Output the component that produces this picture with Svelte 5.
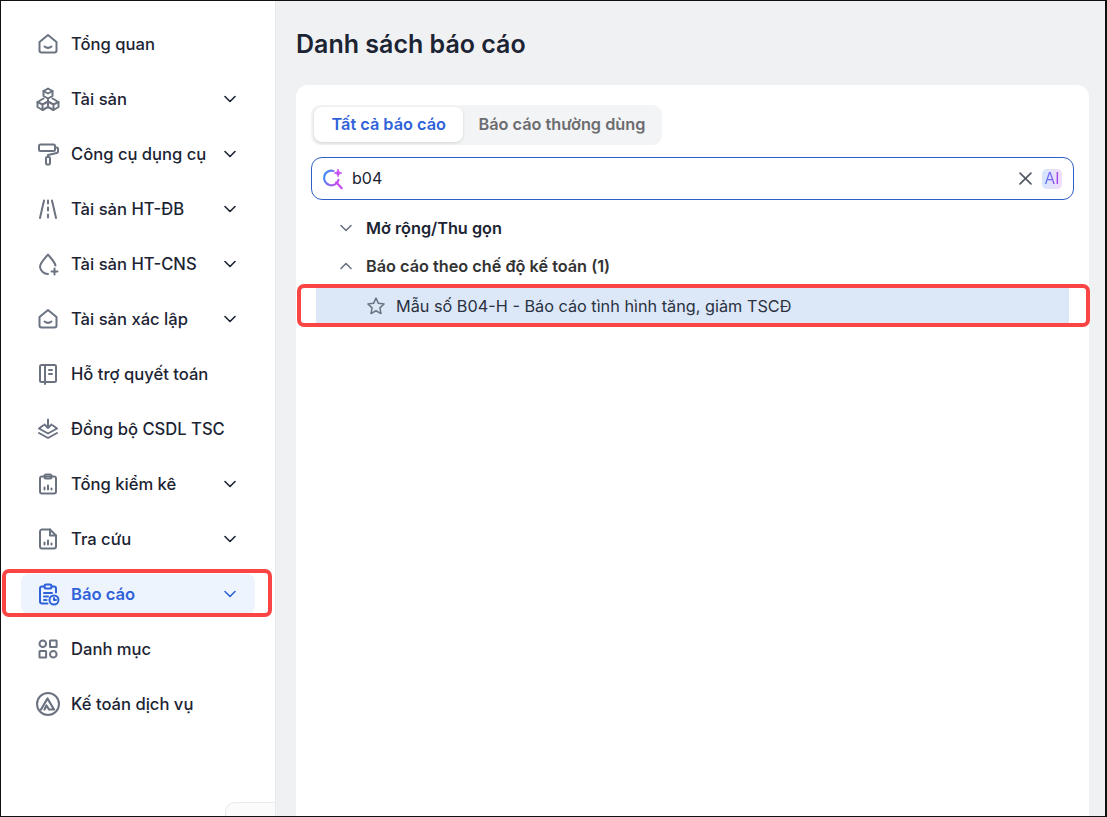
<script lang="ts">
    // Sidebar entries, icon is a key into the snippet below
    const navItems = [
        { label: "Tổng quan", icon: "home", arrow: false },
        { label: "Tài sản", icon: "boxes", arrow: true },
        { label: "Công cụ dụng cụ", icon: "roller", arrow: true },
        { label: "Tài sản HT-ĐB", icon: "road", arrow: true },
        { label: "Tài sản HT-CNS", icon: "drop", arrow: true },
        { label: "Tài sản xác lập", icon: "home", arrow: true },
        { label: "Hỗ trợ quyết toán", icon: "book", arrow: false },
        { label: "Đồng bộ CSDL TSC", icon: "layers", arrow: false },
        { label: "Tổng kiểm kê", icon: "clipboard", arrow: true },
        { label: "Tra cứu", icon: "file", arrow: true },
        { label: "Báo cáo", icon: "report", arrow: true, active: true },
        { label: "Danh mục", icon: "grid", arrow: false },
        { label: "Kế toán dịch vụ", icon: "logo", arrow: false }
    ];
</script>

{#snippet navIcon(name: string)}
    <svg class="nav-icon" viewBox="0 0 24 24" fill="none" stroke="currentColor" stroke-width="2" stroke-linecap="round" stroke-linejoin="round">
        {#if name === "home"}
            <path d="M3.500 10 12 3l8.500 7v8.500a2 2 0 0 1-2 2h-13a2 2 0 0 1-2-2z" />
            <path d="M8.500 14.500c2 1.600 5 1.600 7 0" />
        {:else if name === "boxes"}
            <path d="M12 1.500l4.500 2.500v5l-4.500 2.500L7.500 9V4z" />
            <path d="M7.500 11.500 1.500 15v5L6.500 23 12 20l5.500 3 5-3v-5l-6-3.500" />
            <path d="M12 11.500V20M6.500 17.500V23M17.500 17.500V23M1.500 15l5 2.500L12 14.500l5.500 3 5-2.500M7.500 4 12 6.500 16.500 4" />
        {:else if name === "roller"}
            <path d="M4.500 2.500h13A1.500 1.500 0 0 1 19 4v3.500A1.500 1.500 0 0 1 17.500 9h-13A1.500 1.500 0 0 1 3 7.500V4a1.500 1.500 0 0 1 1.500-1.500z" />
            <path d="M19 5.500h1.500A1.500 1.500 0 0 1 22 7v2.500a1.500 1.500 0 0 1-1.200 1.500L12 13v2" />
            <rect x="10" y="15" width="4" height="7.500" rx="1.300" />
        {:else if name === "road"}
            <path d="M8 3.500 4 21M16 3.500 20 21M12 3.500v3M12 10.500v3M12 17.500v3" />
        {:else if name === "drop"}
            <path d="M19.500 13.500C18.500 9.500 15 6.500 12 2.500 8.500 7 4 10.500 4 15a8 8 0 0 0 8 7" />
            <path d="M18.500 16.500v6M15.500 19.500h6" />
        {:else if name === "book"}
            <path d="M5.500 3h13A1.500 1.500 0 0 1 20 4.500v14a1.500 1.500 0 0 1-1.500 1.500h-13A1.500 1.500 0 0 1 4 18.500v-14A1.500 1.500 0 0 1 5.500 3z" />
            <path d="M9 3v19M13 8h3M13 12h3" />
        {:else if name === "layers"}
            <path d="M12 2.500v8.500M8.500 7.500l3.500 3.500 3.500-3.500" />
            <path d="M7 8.500 3 11.500l9 5 9-5-4-3" />
            <path d="M3 16l9 5 9-5" />
        {:else if name === "clipboard"}
            <rect x="4" y="4.500" width="16" height="17" rx="2" />
            <rect x="8.500" y="2.500" width="7" height="4" rx="1.500" />
            <path d="M8.500 17.500v-2M12 17.500v-4M15.500 17.500v-1" />
        {:else if name === "file"}
            <path d="M14 2.500H6a2 2 0 0 0-2 2v15a2 2 0 0 0 2 2h12a2 2 0 0 0 2-2V8.500z" />
            <path d="M14 2.500v6h6M8.500 17.500v-2M12 17.500v-4M15.500 17.500v-1" />
        {:else if name === "report"}
            <path d="M8.500 4.500H6a2 2 0 0 0-2 2v13a2 2 0 0 0 2 2h5.500M15.500 4.500H18a2 2 0 0 1 2 2v4" />
            <rect x="8.500" y="2.500" width="7" height="4" rx="1.500" />
            <path d="M8 11h8M8 14.500h4M8 18h2.500" />
            <circle cx="18" cy="18" r="4.500" />
            <path d="M18 16v2h2" />
        {:else if name === "grid"}
            <circle cx="6.800" cy="6.800" r="3.300" />
            <rect x="14" y="3.500" width="6.600" height="6.600" rx="0.500" />
            <rect x="3.500" y="14" width="6.600" height="6.600" rx="0.500" />
            <circle cx="17.300" cy="17.300" r="3.300" />
        {:else if name === "logo"}
            <circle cx="12" cy="12" r="11" />
            <path d="M5 17.500 11.500 6.500l6.500 11h-5l-2.500-4-2 4" stroke-width="2.200" />
        {/if}
    </svg>
{/snippet}

{#snippet chevron(cls: string)}
    <svg class={cls} viewBox="0 0 12 8" fill="none" stroke="currentColor" stroke-width="1.600" stroke-linecap="round" stroke-linejoin="round">
        <path d="M1 1.500 6 6.500l5-5" />
    </svg>
{/snippet}

<div class="page">
    <aside class="sidebar">
        <nav class="nav">
            {#each navItems as item}
                <div class="nav-item" class:active={item.active}>
                    {@render navIcon(item.icon)}
                    <span class="nav-label">{item.label}</span>
                    {#if item.arrow}
                        {@render chevron("nav-arrow")}
                    {/if}
                    {#if item.active}
                        <span class="mark mark-nav"></span>
                    {/if}
                </div>
            {/each}
        </nav>
        <div class="collapse-tab"></div>
    </aside>

    <main class="main">
        <h1 class="title">Danh sách báo cáo</h1>
        <section class="card">
            <div class="tabs">
                <button class="tab tab-active">Tất cả báo cáo</button>
                <button class="tab">Báo cáo thường dùng</button>
            </div>

            <div class="search">
                <svg class="search-icon" viewBox="0 0 24 24" fill="none" stroke-width="2.400" stroke-linecap="round">
                    <defs>
                        <linearGradient id="ai-grad" x1="0" y1="0.3" x2="1" y2="0.8">
                            <stop offset="0" stop-color="#3f8cf5" />
                            <stop offset="1" stop-color="#c64cf0" />
                        </linearGradient>
                    </defs>
                    <path d="M12.500 3.200A8 8 0 1 0 18 13" stroke="url(#ai-grad)" />
                    <path d="M15.500 15.500 21.500 22" stroke="#c64cf0" />
                    <path d="M17.500 1.500c.4 2.600 1.400 3.600 4 4-2.600.4-3.600 1.400-4 4-.4-2.600-1.400-3.600-4-4 2.600-.4 3.600-1.400 4-4z" fill="#c64cf0" stroke="#c64cf0" stroke-width="1" />
                </svg>
                <span class="search-value">b04</span>
                <svg class="clear-icon" viewBox="0 0 12 12" fill="none" stroke="currentColor" stroke-width="1.600" stroke-linecap="round">
                    <path d="M1 1l10 10M11 1 1 11" />
                </svg>
                <span class="ai-badge"><span class="ai-text">AI</span></span>
            </div>

            <div class="tree">
                <div class="tree-row">
                    {@render chevron("tree-arrow")}
                    <span class="tree-label expand">Mở rộng/Thu gọn</span>
                </div>
                <div class="tree-row">
                    {@render chevron("tree-arrow up")}
                    <span class="tree-label">Báo cáo theo chế độ kế toán (1)</span>
                </div>
                <div class="report-row">
                    <svg class="star" viewBox="0 0 24 24" fill="none" stroke="currentColor" stroke-width="1.800" stroke-linejoin="round">
                        <path d="M12 2.500l2.900 6.300 6.800.8-5 4.700 1.300 6.800-6-3.400-6 3.400 1.300-6.800-5-4.700 6.800-.8z" />
                    </svg>
                    <span class="report-label">Mẫu số B04-H - Báo cáo tình hình tăng, giảm TSCĐ</span>
                    <span class="mark mark-report"></span>
                </div>
            </div>
        </section>
    </main>
</div>

<style>
    :global(body) {
        margin: 0;
    }

    .page {
        display: flex;
        box-sizing: border-box;
        width: 1107px;
        height: 817px;
        overflow: hidden;
        border: 1px solid #111;
        border-right-width: 2px;
        font-family: Inter, "Noto Sans", sans-serif;
        background: #f0f1f3;
    }

    .sidebar {
        position: relative;
        flex: none;
        width: 274px;
        background: #fff;
        box-shadow: 1px 0 0 #e9eaec;
    }

    .nav {
        display: flex;
        flex-direction: column;
        gap: 15px;
        padding: 23px 20px 0;
    }

    .nav-item {
        position: relative;
        display: flex;
        align-items: center;
        height: 40px;
        padding: 0 19px 0 15px;
        border-radius: 8px;
        color: #6b7280;
    }

    .nav-item.active {
        background: #edf4fe;
        color: #2f62d9;
    }

    .nav-icon {
        flex: none;
        width: 24px;
        height: 24px;
    }

    .nav-label {
        flex: 1;
        margin-left: 11px;
        font-size: 16.600px;
        font-weight: 500;
        line-height: 22px;
        color: #1c2433;
    }

    .active .nav-label {
        font-weight: 600;
        color: #2f62d9;
    }

    :global(.nav-arrow) {
        flex: none;
        width: 12px;
        height: 8px;
        color: #1c2433;
    }

    .active :global(.nav-arrow) {
        color: #2f62d9;
    }

    /* red annotation frames lying over the screenshot */
    .mark {
        position: absolute;
        box-sizing: border-box;
        border: 4px solid #fb4444;
        border-radius: 7px;
        pointer-events: none;
    }

    .mark-nav {
        inset: -5px -17px -3px -19px;
    }

    .mark-report {
        inset: -4px -21px -3px -19px;
    }

    .collapse-tab {
        position: absolute;
        right: 0;
        bottom: -20px;
        width: 49px;
        height: 32px;
        border-radius: 10px 0 0 0;
        border: 1px solid #e9eaec;
        border-right: none;
        background: #fbfbfc;
    }

    .main {
        flex: 1;
        min-width: 0;
        padding: 0 16px 0 21px;
    }

    .title {
        margin: 0;
        padding: 27px 0 25px;
        font-size: 25px;
        font-weight: 600;
        line-height: 32px;
        color: #1c2433;
    }

    .card {
        box-sizing: border-box;
        height: 740px;
        padding: 20px 15px 0;
        border-radius: 12px;
        background: #fff;
    }

    .tabs {
        display: inline-flex;
        padding: 2px 3px 3px;
        border-radius: 9px;
        background: #f3f4f5;
    }

    .tab {
        box-sizing: border-box;
        height: 35px;
        padding: 0 14px 2px;
        border: none;
        border-radius: 8px;
        background: none;
        font-family: inherit;
        font-size: 16.300px;
        font-weight: 600;
        color: #6b6c70;
    }

    .tab-active {
        padding: 0 17.500px 2px;
        margin-right: 1px;
        background: #fff;
        color: #2f62d9;
        box-shadow: 0 1px 3px rgba(0, 0, 0, 0.14);
    }

    .search {
        display: flex;
        align-items: center;
        box-sizing: border-box;
        height: 43px;
        margin-top: 12px;
        padding: 0 11px 0 10px;
        border: 1px solid #2f5fc4;
        border-radius: 11px;
    }

    .search-icon {
        flex: none;
        width: 22px;
        height: 24px;
    }

    .search-value {
        flex: 1;
        margin-left: 8px;
        padding-bottom: 2px;
        font-size: 16px;
        color: #1c2433;
    }

    .clear-icon {
        flex: none;
        width: 13px;
        height: 13px;
        color: #555b66;
    }

    .ai-badge {
        display: flex;
        align-items: center;
        justify-content: center;
        flex: none;
        width: 20px;
        height: 20px;
        margin-left: 10px;
        border-radius: 5px;
        background: linear-gradient(90deg, #d6e6fd, #f0dcfb);
    }

    .ai-text {
        font-size: 15.500px;
        line-height: 20px;
        background: linear-gradient(90deg, #4f7cf3, #b03fe8);
        -webkit-background-clip: text;
        background-clip: text;
        color: transparent;
    }

    .tree {
        margin-top: 9px;
        padding: 0 5px;
    }

    .tree-row {
        display: flex;
        align-items: center;
        height: 38px;
        padding-left: 24px;
    }

    :global(.tree-arrow) {
        flex: none;
        width: 12px;
        height: 8px;
        color: #6b7280;
    }

    :global(.tree-arrow.up) {
        transform: rotate(180deg);
    }

    .tree-label {
        margin-left: 14px;
        font-size: 16.250px;
        font-weight: 600;
        color: #333;
    }

    .expand {
        color: #1c2433;
    }

    .report-row {
        position: relative;
        display: flex;
        align-items: center;
        height: 36px;
        margin-top: 3px;
        padding-left: 50px;
        background: #dce8f8;
    }

    .star {
        flex: none;
        width: 20px;
        height: 20px;
        color: #6b7280;
    }

    .report-label {
        margin-left: 10px;
        font-size: 16.250px;
        color: #2a3140;
    }
</style>
